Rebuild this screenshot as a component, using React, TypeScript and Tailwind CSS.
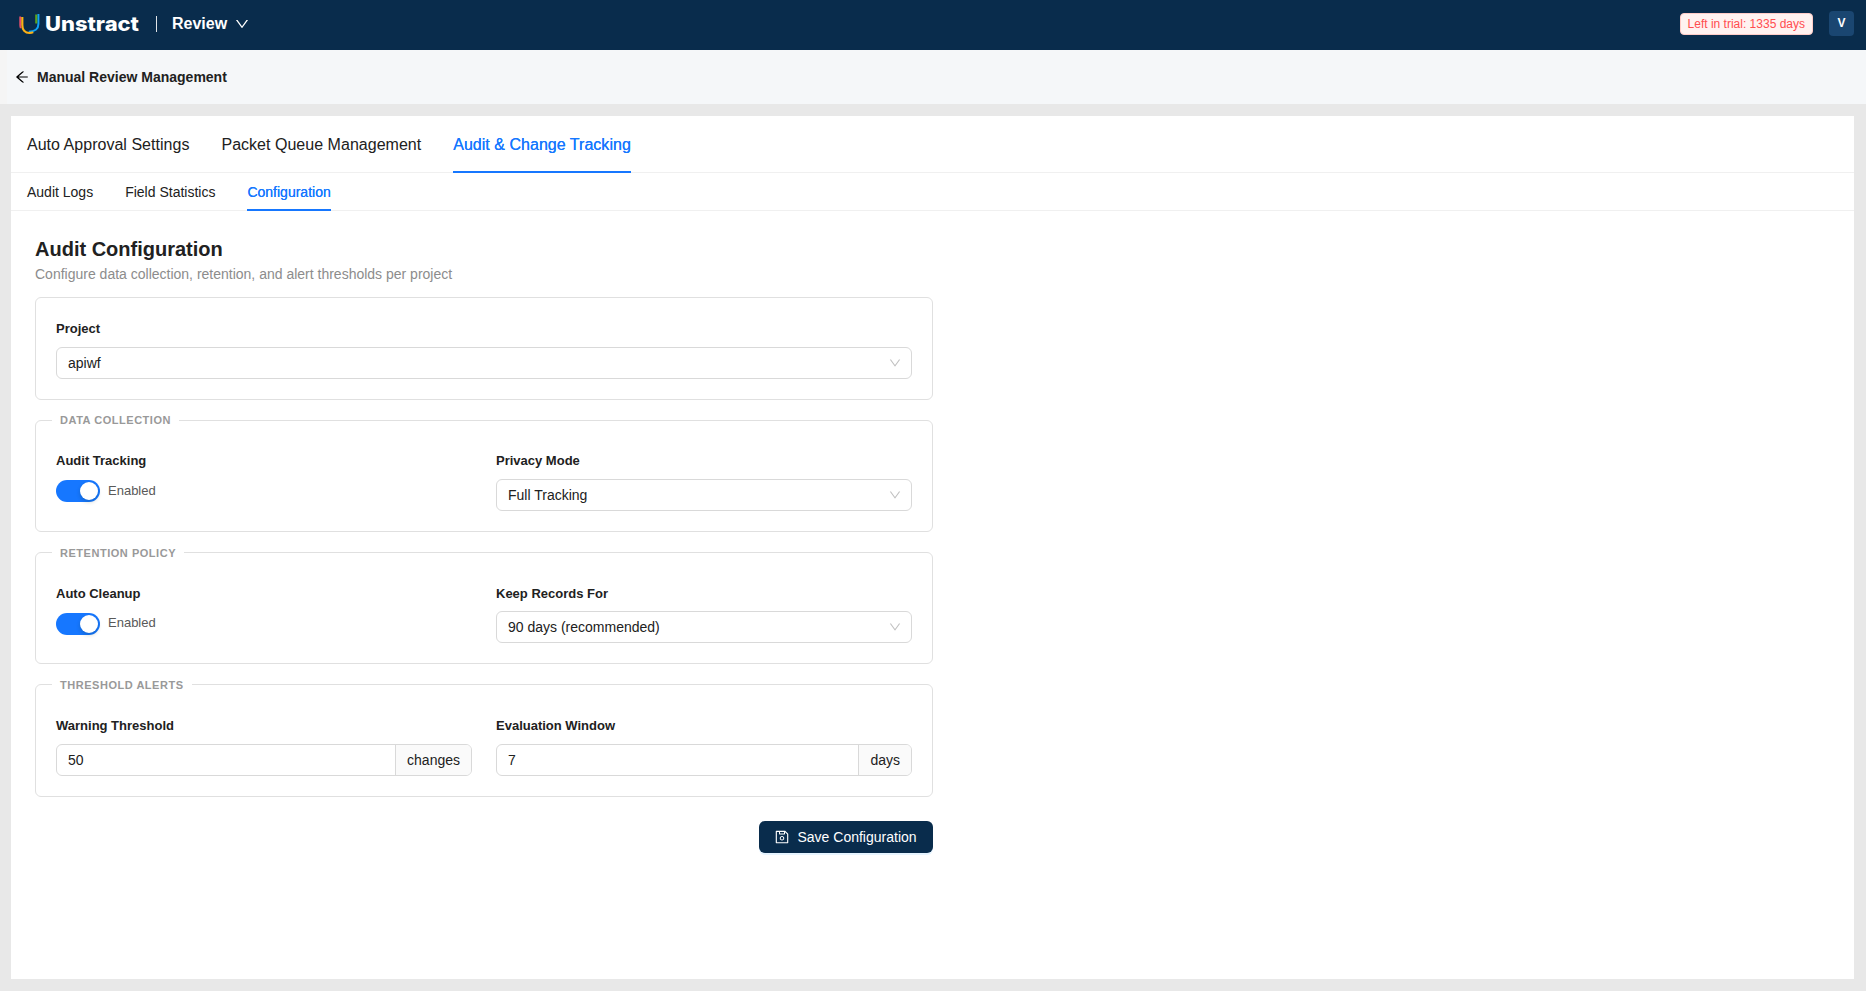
import React, { useState } from 'react';
import { AiOutlineArrowLeft, AiOutlineDown, AiOutlineSave } from 'react-icons/ai';

// Ant glyphs are trimmed to their inner 896 unit box
const ICON_BOX = '64 64 896 896';

const mainTabs = ['Auto Approval Settings', 'Packet Queue Management', 'Audit & Change Tracking'];
const subTabs = ['Audit Logs', 'Field Statistics', 'Configuration'];

function Logo() {
  return (
    <svg width="123" height="24" viewBox="0 0 123 24" className="block">
      <path d="M3.2 3.5V12c0 1.2.2 2.200.6 3.2" fill="none" stroke="#e8506e" strokeWidth="1.8" />
      <path d="M21.4 1v10c0 4.5-3.2 7.8-9.6 7.8" fill="none" stroke="#0fa3f5" strokeWidth="2" />
      <path d="M19.2 1.5V10.5" fill="none" stroke="#5da31c" strokeWidth="2" />
      <path d="M5.3 4v8c0 4.8 2.7 8 7.2 8 1.6 0 2.7-.3 3.7-.9" fill="none" stroke="#fbb116" strokeWidth="2.2" />
      <text
        x="28"
        y="18"
        textLength="94"
        lengthAdjust="spacingAndGlyphs"
        fill="#fff"
        fontFamily="Inter, sans-serif"
        fontSize="20"
        fontWeight="800"
      >
        Unstract
      </text>
    </svg>
  );
}

function Header() {
  return (
    <header className="flex h-[50px] items-center bg-[#092c4c] pr-3 pl-[17px] text-white">
      <Logo />
      <div className="mb-0.5 ml-4 h-4 w-px bg-[#e0e4e8]" />
      <div className="mb-0.5 ml-[15px] flex items-center gap-2 text-base font-bold">
        <span className="leading-[22px]">Review</span>
        <AiOutlineDown viewBox={ICON_BOX} className="size-3.5" />
      </div>
      <div className="ml-auto flex items-center gap-4">
        <span className="mb-0.5 rounded border border-[#ffccc7] bg-[#fff2f0] px-[7px] text-xs leading-5 text-[#ff4d4f]">
          Left in trial: 1335 days
        </span>
        <span className="mb-[3px] flex size-[25px] items-center justify-center rounded-[4px] bg-[#1a4671] pb-0.5 text-xs font-bold">
          V
        </span>
      </div>
    </header>
  );
}

interface TabsProps {
  items: string[];
  initial: string;
  className: string;
}

function Tabs({ items, initial, className }: TabsProps) {
  const [active, setActive] = useState(initial);

  return (
    <nav className={`flex gap-8 border-b border-[#f0f0f0] px-4 ${className}`}>
      {items.map((item) => (
        <button
          key={item}
          onClick={() => setActive(item)}
          className={`-mb-px border-b-2 pt-0.5 ${
            item === active
              ? 'border-[#1677ff] text-[#1677ff] [text-shadow:0_0_0.25px_currentcolor]'
              : 'border-transparent'
          }`}
        >
          {item}
        </button>
      ))}
    </nav>
  );
}

function Field({ label, children }: { label: string; children: React.ReactNode }) {
  return (
    <div className="min-w-0 flex-1">
      <div className="mb-[7.4px] pt-[0.6px] text-[13px] leading-[20.43px] font-bold">{label}</div>
      {children}
    </div>
  );
}

function SelectBox({ value }: { value: string }) {
  return (
    <div className="flex h-8 items-center justify-between rounded-md border border-[#d9d9d9] pr-2.5 pl-[11px] text-sm">
      <span>{value}</span>
      <AiOutlineDown viewBox={ICON_BOX} className="size-3 text-black/25" />
    </div>
  );
}

function Toggle() {
  const [on, setOn] = useState(true);

  return (
    <div className="flex items-center gap-2 pt-[1.2px]">
      <button
        role="switch"
        aria-checked={on}
        onClick={() => setOn(!on)}
        className={`flex h-[22px] w-11 rounded-full p-0.5 ${on ? 'justify-end bg-[#1677ff]' : 'bg-black/25'}`}
      >
        <span className="size-[18px] rounded-full bg-white shadow-[0_2px_4px_rgba(0,35,11,0.2)]" />
      </button>
      <span className="mb-[0.6px] text-[13px] leading-5 text-[#595959]">{on ? 'Enabled' : 'Disabled'}</span>
    </div>
  );
}

function NumberInput({ value, unit }: { value: string; unit: string }) {
  return (
    <div className="flex h-8 overflow-hidden rounded-md border border-[#d9d9d9] text-sm">
      <input defaultValue={value} className="min-w-0 flex-1 px-[11px] outline-none" />
      <span className="border-l border-[#d9d9d9] bg-[#fafafa] px-[11px] leading-[30px]">{unit}</span>
    </div>
  );
}

function Section({ title, children }: { title: string; children: React.ReactNode }) {
  return (
    <section className="mt-5 rounded-md border border-[#e0e0e0] px-5 pb-5">
      <h3 className="-mt-[9.3px] -ml-1 w-fit bg-white px-2 text-[11px] leading-[18px] font-bold tracking-[0.53px] text-[#999] uppercase">
        {title}
      </h3>
      <div className="mt-[21.3px] flex h-[60.43px] gap-6">{children}</div>
    </section>
  );
}

export default function App() {
  return (
    <div className="flex h-[991px] flex-col bg-[#e8e8e8] font-['Liberation_Sans',Arial,sans-serif] text-[#212121]">
      <Header />
      <div className="flex h-[54px] items-center gap-2 border-l-[7px] border-[#f5f5f5] bg-[#f5f7f9] pl-2">
        <AiOutlineArrowLeft viewBox={ICON_BOX} className="size-3.5 text-black" />
        <h1 className="text-sm font-bold">Manual Review Management</h1>
      </div>

      <main className="mt-3 mr-3 mb-3 ml-[11px] flex-1 bg-white">
        <Tabs items={mainTabs} initial="Audit & Change Tracking" className="h-[57px] text-base tracking-[0.025px]" />
        <Tabs items={subTabs} initial="Configuration" className="h-[38px] text-sm" />

        <div className="ml-6 w-[898px] pt-6">
          <h2 className="text-xl leading-7 font-bold">Audit Configuration</h2>
          <p className="text-sm leading-[22px] text-[#8c8c8c]">
            Configure data collection, retention, and alert thresholds per project
          </p>

          <section className="mt-[12.14px] rounded-md border border-[#e0e0e0] p-5">
            <Field label="Project">
              <SelectBox value="apiwf" />
            </Field>
          </section>

          <Section title="Data Collection">
            <Field label="Audit Tracking">
              <Toggle />
            </Field>
            <Field label="Privacy Mode">
              <SelectBox value="Full Tracking" />
            </Field>
          </Section>

          <Section title="Retention Policy">
            <Field label="Auto Cleanup">
              <Toggle />
            </Field>
            <Field label="Keep Records For">
              <SelectBox value="90 days (recommended)" />
            </Field>
          </Section>

          <Section title="Threshold Alerts">
            <Field label="Warning Threshold">
              <NumberInput value="50" unit="changes" />
            </Field>
            <Field label="Evaluation Window">
              <NumberInput value="7" unit="days" />
            </Field>
          </Section>

          <button className="mt-6 ml-auto flex h-8 w-[174px] items-center gap-[8.5px] rounded-md bg-[#092c4c] px-4 text-sm whitespace-nowrap text-white shadow-[0_2px_0_rgba(5,145,255,0.1)]">
            <AiOutlineSave viewBox={ICON_BOX} className="size-3.5" />
            Save Configuration
          </button>
        </div>
      </main>
    </div>
  );
}
